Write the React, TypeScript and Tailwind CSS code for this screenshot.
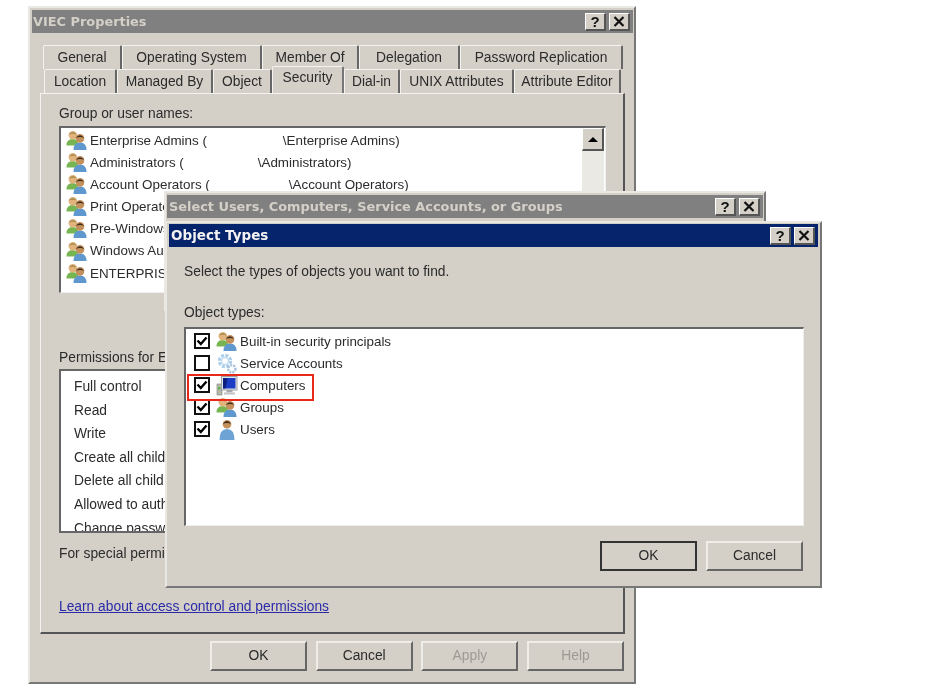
import React from 'react'

const UsersIcon = () => (
  <svg width="22" height="22" viewBox="0 0 22 22" className="shrink-0">
    <path d="M0.5 15.5 Q0.5 9 6.5 9 Q12.5 9 12.5 15.5 Z" fill="#76b552" />
    <circle cx="6.8" cy="5.2" r="4.2" fill="#e0b47c" />
    <path d="M2.6 4.6 Q6.8 -0.8 11 4.6 Q6.8 2.8 2.6 4.6 Z" fill="#a98a4e" />
    <path d="M7.5 20 Q7.5 12.5 14 12.5 Q20.5 12.5 20.5 20 Z" fill="#5f97cf" />
    <circle cx="14" cy="8.4" r="4.3" fill="#c4905c" />
    <path d="M9.7 8 Q14 2.4 18.3 8 Q14 6 9.7 8 Z" fill="#3f2d1d" />
  </svg>
)

const GearIcon = () => (
  <svg width="22" height="22" viewBox="0 0 22 22" className="shrink-0">
    <circle cx="9" cy="8" r="5.4" fill="none" stroke="#a9cdea" strokeWidth="3.6" strokeDasharray="2.8 1.4" />
    <circle cx="9" cy="8" r="3.6" fill="none" stroke="#c9e0f2" strokeWidth="1.8" />
    <circle cx="15.8" cy="15.8" r="3.6" fill="none" stroke="#a9c4dc" strokeWidth="2.6" strokeDasharray="2 1" />
  </svg>
)

const ComputerIcon = () => (
  <svg width="22" height="22" viewBox="0 0 22 22" className="shrink-0">
    <rect x="1" y="9" width="5" height="11" fill="#b4b8ac" stroke="#7f8478" strokeWidth="0.6" />
    <rect x="2" y="12" width="2.4" height="2.4" fill="#5fb24a" />
    <rect x="5.5" y="1.5" width="15.5" height="13.5" fill="#e4e6ea" stroke="#9a9ea5" strokeWidth="1" />
    <path d="M7 3 H19.5 V13.5 H7 Z" fill="#1b3cc4" />
    <path d="M7 3 H11.5 L9.5 13.5 H7 Z" fill="#0c1f7c" />
    <rect x="10.5" y="15" width="6" height="2.4" fill="#a5a8ae" />
    <rect x="8" y="17.4" width="11" height="2.2" fill="#c4c6ca" />
  </svg>
)

const UserIcon = () => (
  <svg width="22" height="22" viewBox="0 0 22 22" className="shrink-0">
    <path d="M3.5 21 Q3.5 10 11 10 Q18.5 10 18.5 21 Z" fill="#6ea3d6" />
    <circle cx="11" cy="5.2" r="4.3" fill="#c4905c" />
    <path d="M6.7 5 Q11 -1 15.3 5 Q11 2.8 6.7 5 Z" fill="#3c2a1a" />
  </svg>
)

const Check = ({ checked }: { checked: boolean }) => (
  <div className="w-4 h-4 shrink-0 -translate-y-[1px] border-2 border-[#111] bg-white flex items-center justify-center">
    {checked && (
      <svg width="12" height="12" viewBox="0 0 12 12">
        <path d="M1.5 5.5 L4.8 9 L10.5 2.5" fill="none" stroke="#000" strokeWidth="2.4" />
      </svg>
    )}
  </div>
)

const CaptionButton = ({ label }: { label: string }) => (
  <div className="w-[21px] h-[18px] bg-[#d4d0c8] border-t border-l border-white border-r-2 border-b-2 border-r-[#555] border-b-[#555] flex items-center justify-center text-[15px] leading-none font-bold text-[#111]">
    {label === 'x' ? (
      <svg width="12" height="11" viewBox="0 0 12 11">
        <path d="M1.5 1 L10.5 10 M10.5 1 L1.5 10" stroke="#111" strokeWidth="2.2" />
      </svg>
    ) : (
      label
    )}
  </div>
)

const TitleBar = ({ title, active, left }: { title: string; active?: boolean; left: string }) => (
  <div className={`h-[23px] flex items-center justify-between pr-[3px] ${left} ${active ? 'bg-[#06246b] text-[#f2f2f2]' : 'bg-[#808080] text-[#d4d0c8]'}`}>
    <span className={`font-['DejaVu_Sans'] font-bold whitespace-nowrap ${active ? 'text-[13.5px]' : 'text-[12.9px]'}`}>{title}</span>
    <div className="flex gap-[3px]">
      <CaptionButton label="?" />
      <CaptionButton label="x" />
    </div>
  </div>
)

const Tab = ({ label, width, selected }: { label: string; width: string; selected?: boolean }) => (
  <div
    className={`${width} shrink-0 flex items-center justify-center rounded-t-[2px] border-t border-l border-[#f4f3ef] whitespace-nowrap ${
      selected ? 'h-[27px] -mt-[3px] pb-[3px] relative z-10 bg-[#d4d0c8] border-r-2 border-r-[#777]' : 'h-[24px] pt-[2px] border-r-2 border-r-[#666]'
    }`}
  >
    {label}
  </div>
)

const WinButton = ({ label, disabled, isDefault }: { label: string; disabled?: boolean; isDefault?: boolean }) => (
  <div
    className={`w-[97px] h-[30px] flex items-center justify-center bg-[#d4d0c8] ${
      isDefault
        ? 'border-2 border-[#333]'
        : 'border-t-2 border-l-2 border-[#eeede8] border-r-2 border-b-2 border-r-[#666] border-b-[#666]'
    } ${disabled ? 'text-[#9c9a94]' : ''}`}
  >
    {label}
  </div>
)

const groups = [
  ['Enterprise Admins (', 'w-[72px]', '\\Enterprise Admins)'],
  ['Administrators (', 'w-[70px]', '\\Administrators)'],
  ['Account Operators (', 'w-[75px]', '\\Account Operators)'],
  ['Print Operators (', 'w-[40px]', '\\Print Operators)'],
  ['Pre-Windows 2000 Compatible Access', '', ''],
  ['Windows Authorization Access Group', '', ''],
  ['ENTERPRISE DOMAIN CONTROLLERS', '', ''],
]

const permissions = ['Full control', 'Read', 'Write', 'Create all child objects', 'Delete all child objects', 'Allowed to authenticate', 'Change password']

const objectTypes = [
  { label: 'Built-in security principals', checked: true, icon: <UsersIcon /> },
  { label: 'Service Accounts', checked: false, icon: <GearIcon /> },
  { label: 'Computers', checked: true, icon: <ComputerIcon /> },
  { label: 'Groups', checked: true, icon: <UsersIcon /> },
  { label: 'Users', checked: true, icon: <UserIcon /> },
]

export default function App() {
  return (
    <div className="relative w-[947px] h-[698px] overflow-hidden bg-white font-['Liberation_Sans',sans-serif] text-[13.8px] text-[#2b2b2b] blur-[0.6px]">
      {/* properties window */}
      <div className="absolute left-[28px] top-[6px] w-[608px] h-[678px] bg-[#d4d0c8] border-t-2 border-l-2 border-[#e9e8e3] border-r-2 border-b-2 border-r-[#777] border-b-[#777] pt-[2px] pl-[2px] pb-[2px] pr-[1px]">
        <TitleBar title="VIEC Properties" left="pl-[1px]" />
        <div className="pl-[8px] pr-[8px] pt-[12px]">
          <div className="flex pl-[3px]">
            <Tab label="General" width="w-[79px]" />
            <Tab label="Operating System" width="w-[140px]" />
            <Tab label="Member Of" width="w-[97px]" />
            <Tab label="Delegation" width="w-[101px]" />
            <Tab label="Password Replication" width="w-[163px]" />
          </div>
          <div className="flex pl-[4px]">
            <Tab label="Location" width="w-[73px]" />
            <Tab label="Managed By" width="w-[96px]" />
            <Tab label="Object" width="w-[59px]" />
            <Tab label="Security" width="w-[72px]" selected />
            <Tab label="Dial-in" width="w-[56px]" />
            <Tab label="UNIX Attributes" width="w-[114px]" />
            <Tab label="Attribute Editor" width="w-[107px]" />
          </div>
          <div className="w-[585px] h-[541px] border-t border-l border-[#f4f3ef] border-r-2 border-b-2 border-r-[#555] border-b-[#555] px-[18px] pt-[11px]">
            <div className="leading-[17px]">Group or user names:</div>
            <div className="relative mt-[4px] w-[547px] h-[167px] bg-white border-t-2 border-l-2 border-[#666] border-r border-b border-r-[#eee] border-b-[#eee] pl-[5px] pt-[2px] text-[13.4px]">
              {groups.map(([name, gap, domain]) => (
                <div key={name} className="flex items-center h-[22.1px] gap-[2px] whitespace-nowrap">
                  <UsersIcon />
                  <span>{name}</span>
                  {gap && <span className={gap} />}
                  <span>{domain}</span>
                </div>
              ))}
              <div className="absolute right-[1px] top-0 bottom-0 w-[22px] flex flex-col bg-[#ebe9e3]">
                <div className="h-[23px] bg-[#d4d0c8] border-t border-l border-white border-r-2 border-b-2 border-r-[#555] border-b-[#555] flex items-center justify-center">
                  <div className="w-0 h-0 border-x-[5px] border-x-transparent border-b-[5px] border-b-black" />
                </div>
              </div>
            </div>
            <div className="mt-[56px] leading-[17px] whitespace-nowrap">Permissions for Enterprise Admins</div>
            <div className="mt-[3px] w-[547px] h-[164px] overflow-hidden bg-white border-t-2 border-l-2 border-[#666] border-b-2 border-b-[#666] pl-[13px] pt-[4px]">
              {permissions.map((p) => (
                <div key={p} className="h-[23.6px] leading-[23.6px] whitespace-nowrap">{p}</div>
              ))}
            </div>
            <div className="mt-[12px] leading-[17px] whitespace-nowrap">For special permissions or advanced settings</div>
            <div className="mt-[36px] leading-[17px] text-[#2a2aa8] underline whitespace-nowrap">Learn about access control and permissions</div>
          </div>
          <div className="flex justify-end gap-[8.67px] mt-[7px] pr-[1px]">
            <WinButton label="OK" />
            <WinButton label="Cancel" />
            <WinButton label="Apply" disabled />
            <WinButton label="Help" disabled />
          </div>
        </div>
      </div>

      {/* select users dialog, mostly covered */}
      <div className="absolute left-[164px] top-[191px] w-[602px] h-[120px] bg-[#d4d0c8] border-t-2 border-l-2 border-[#e9e8e3] border-r-2 border-r-[#777] pt-[2px] px-[1px]">
        <TitleBar title="Select Users, Computers, Service Accounts, or Groups" left="pl-[2px]" />
      </div>

      {/* object types dialog */}
      <div className="absolute left-[165px] top-[221px] w-[657px] h-[367px] bg-[#d4d0c8] border-t-2 border-l-2 border-[#e9e8e3] border-r-2 border-b-2 border-r-[#777] border-b-[#777] pt-[1px] pl-[2px] pr-[2px]">
        <TitleBar title="Object Types" active left="pl-[2px]" />
        <div className="pl-[15px] pr-[15px] pt-[16px]">
          <div className="leading-[17px]">Select the types of objects you want to find.</div>
          <div className="mt-[24px] leading-[17px]">Object types:</div>
          <div className="relative mt-[6px] w-[620px] h-[199px] bg-white border-t-2 border-l-2 border-[#666] border-r border-b border-r-[#eee] border-b-[#eee] pl-[8px] pt-[2px] text-[13.4px]">
            {objectTypes.map((t) => (
              <div key={t.label} className="flex items-center h-[22px] whitespace-nowrap">
                <Check checked={t.checked} />
                <span className="ml-[6px] mr-[2px]">{t.icon}</span>
                <span>{t.label}</span>
              </div>
            ))}
            <div className="absolute left-[1px] top-[45px] w-[127px] h-[27px] border-2 border-[#e9271a]" />
          </div>
          <div className="flex justify-end gap-[9px] mt-[15px]">
            <WinButton label="OK" isDefault />
            <WinButton label="Cancel" />
          </div>
        </div>
      </div>
    </div>
  )
}
